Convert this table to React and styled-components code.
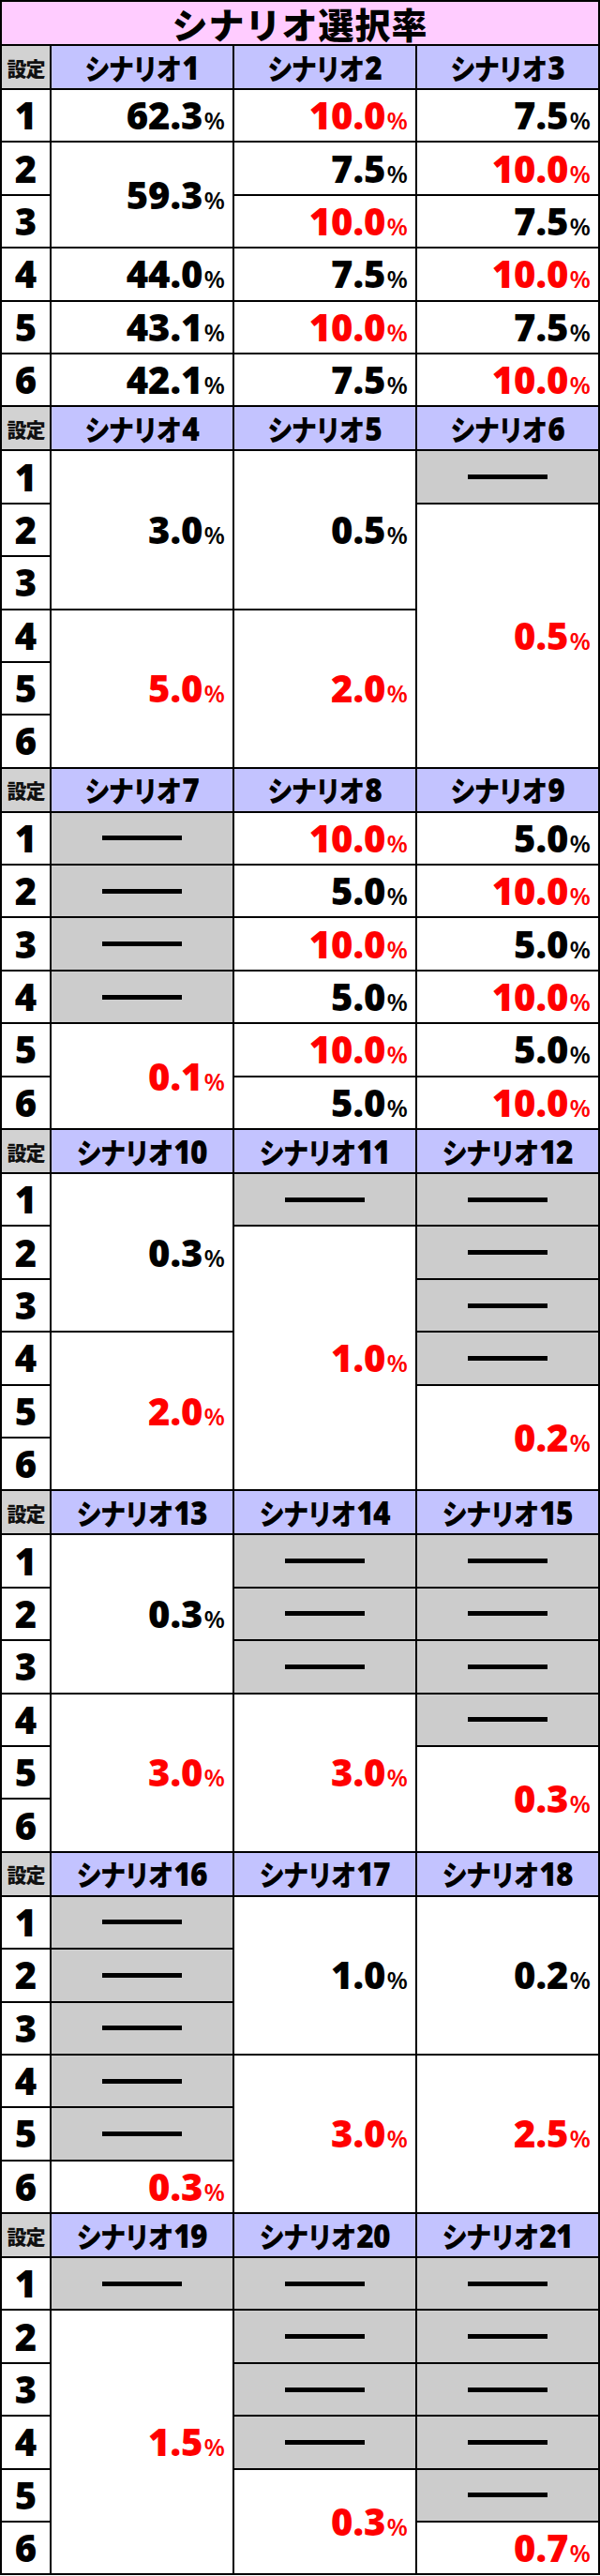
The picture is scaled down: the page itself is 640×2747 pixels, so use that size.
import React from "react";
import styled, { createGlobalStyle } from "styled-components";

const GlobalStyle = createGlobalStyle`
  html, body { margin: 0; padding: 0; background: #ffffff; }
  body { font-family: "Open Sans", "Noto Sans CJK JP", sans-serif; }
`;

const Page = styled.div`
  width: 640px;
  box-sizing: border-box;
  display: flex;
  flex-direction: column;
  gap: 2px;
  padding: 2px;
  background: #000;
`;

const Title = styled.div`
  height: 45px;
  background: #ffccff;
  display: flex;
  align-items: center;
  justify-content: center;
  font-family: "Noto Sans CJK JP", sans-serif;
  font-weight: 900;
  font-size: 38px;
  line-height: 1;
  letter-spacing: 1px;
  color: #000;
`;

const Block = styled.div`
  display: grid;
  grid-template-columns: 51px repeat(3, 1fr);
  grid-template-rows: 45px repeat(6, 54.4px);
  gap: 2px;
  background: #000;
`;

const SettingHead = styled.div`
  grid-column: 1;
  grid-row: 1;
  background: #d2d2d2;
  display: flex;
  align-items: center;
  justify-content: center;
  font-family: "Noto Sans CJK JP", sans-serif;
  font-weight: 900;
  font-size: 21px;
  letter-spacing: -1px;
  color: #111;
`;

const ScenarioHead = styled.div`
  grid-column: ${(p) => p.$col};
  grid-row: 1;
  background: #c3c3ff;
  display: flex;
  align-items: center;
  justify-content: center;
  color: #000;
`;

const HeadText = styled.span`
  display: inline-block;
  font-family: "Open Sans", "Noto Sans CJK JP", sans-serif;
  font-weight: 900;
  font-size: 31px;
  line-height: 1;
  letter-spacing: -2px;
  transform: scaleX(0.88);
  white-space: nowrap;
`;

const HeadNum = styled.span`
  font-weight: 800;
  font-size: 36px;
  letter-spacing: -1px;
  margin-left: 2px;
`;

const RowLabel = styled.div`
  grid-column: 1;
  grid-row: ${(p) => p.$row};
  background: #fff;
  display: flex;
  align-items: center;
  justify-content: center;
  font-family: "Open Sans", sans-serif;
  font-weight: 800;
  font-size: 40px;
  line-height: 1;
  color: #000;
`;

const ValueCell = styled.div`
  grid-column: ${(p) => p.$col};
  grid-row: ${(p) => p.$row} / span ${(p) => p.$span};
  background: #fff;
  display: flex;
  align-items: center;
  justify-content: flex-end;
  padding-right: 8px;
  color: ${(p) => (p.$red ? "#ff0000" : "#000")};
`;

const Num = styled.span`
  display: block;
  font-family: "Open Sans", sans-serif;
  font-weight: 800;
  font-size: 40px;
  line-height: 1;
  letter-spacing: 0;
  white-space: nowrap;
`;

const Pct = styled.span`
  font-size: 26px;
  font-weight: 600;
  margin-left: 1px;
`;

const DashCell = styled.div`
  grid-column: ${(p) => p.$col};
  grid-row: ${(p) => p.$row} / span ${(p) => p.$span};
  background: #cccccc;
  display: flex;
  align-items: center;
  justify-content: center;
`;

const Bar = styled.span`
  display: block;
  width: 85px;
  height: 5px;
  background: #000;
`;

const D = { dash: true };
const b = (v, span = 1) => ({ v, span });
const r = (v, span = 1) => ({ v, span, red: true });

const blocks = [
  {
    nums: [1, 2, 3],
    cols: [
      [b("62.3"), b("59.3", 2), b("44.0"), b("43.1"), b("42.1")],
      [r("10.0"), b("7.5"), r("10.0"), b("7.5"), r("10.0"), b("7.5")],
      [b("7.5"), r("10.0"), b("7.5"), r("10.0"), b("7.5"), r("10.0")],
    ],
  },
  {
    nums: [4, 5, 6],
    cols: [
      [b("3.0", 3), r("5.0", 3)],
      [b("0.5", 3), r("2.0", 3)],
      [D, r("0.5", 5)],
    ],
  },
  {
    nums: [7, 8, 9],
    cols: [
      [D, D, D, D, r("0.1", 2)],
      [r("10.0"), b("5.0"), r("10.0"), b("5.0"), r("10.0"), b("5.0")],
      [b("5.0"), r("10.0"), b("5.0"), r("10.0"), b("5.0"), r("10.0")],
    ],
  },
  {
    nums: [10, 11, 12],
    cols: [
      [b("0.3", 3), r("2.0", 3)],
      [D, r("1.0", 5)],
      [D, D, D, D, r("0.2", 2)],
    ],
  },
  {
    nums: [13, 14, 15],
    cols: [
      [b("0.3", 3), r("3.0", 3)],
      [D, D, D, r("3.0", 3)],
      [D, D, D, D, r("0.3", 2)],
    ],
  },
  {
    nums: [16, 17, 18],
    cols: [
      [D, D, D, D, D, r("0.3")],
      [b("1.0", 3), r("3.0", 3)],
      [b("0.2", 3), r("2.5", 3)],
    ],
  },
  {
    nums: [19, 20, 21],
    cols: [
      [D, r("1.5", 5)],
      [D, D, D, D, r("0.3", 2)],
      [D, D, D, D, D, r("0.7")],
    ],
  },
];

function Column({ cells, col }) {
  let row = 2;
  return cells.map((c, i) => {
    const span = c.span || 1;
    const start = row;
    row += span;
    if (c.dash) {
      return (
        <DashCell key={i} $col={col} $row={start} $span={span}>
          <Bar />
        </DashCell>
      );
    }
    return (
      <ValueCell key={i} $col={col} $row={start} $span={span} $red={c.red}>
        <Num>
          {c.v}
          <Pct>%</Pct>
        </Num>
      </ValueCell>
    );
  });
}

function ScenarioBlock({ block }) {
  return (
    <Block>
      <SettingHead>設定</SettingHead>
      {block.nums.map((n, i) => (
        <ScenarioHead key={n} $col={i + 2}>
          <HeadText>
            シナリオ<HeadNum>{n}</HeadNum>
          </HeadText>
        </ScenarioHead>
      ))}
      {[1, 2, 3, 4, 5, 6].map((s) => (
        <RowLabel key={s} $row={s + 1}>
          {s}
        </RowLabel>
      ))}
      {block.cols.map((cells, i) => (
        <Column key={i} cells={cells} col={i + 2} />
      ))}
    </Block>
  );
}

export default function App() {
  return (
    <>
      <GlobalStyle />
      <Page>
        <Title>シナリオ選択率</Title>
        {blocks.map((bl, i) => (
          <ScenarioBlock key={i} block={bl} />
        ))}
      </Page>
    </>
  );
}
